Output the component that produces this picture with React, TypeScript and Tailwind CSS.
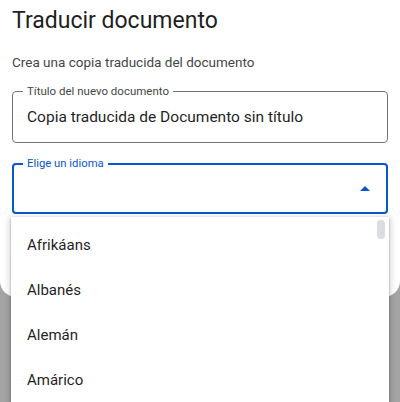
const languages = ["Afrikáans", "Albanés", "Alemán", "Amárico"];

export default function App() {
  return (
    <div
      className="relative h-[402px] w-[400px] overflow-hidden bg-[#a4a4a4]"
      style={{ fontFamily: "Roboto, 'Noto Sans', Arial, sans-serif" }}
    >
      {/* dialog */}
      <div className="h-[297px] rounded-b-[16px] bg-white px-3 pt-[7px]">
        <h1 className="text-[23px] leading-[28px] text-[#1f1f1f]">
          Traducir documento
        </h1>
        <p className="mt-[17px] text-[13.5px] leading-[20px] text-[#444746]">
          Crea una copia traducida del documento
        </p>

        <fieldset className="mt-[13px] rounded-[4px] border border-[#747775] px-[14px] pb-[13px] pt-[7px]">
          <legend className="-ml-[4px] px-[4px] text-[11.5px] leading-[13px] text-[#444746]">
            Título del nuevo documento
          </legend>
          <div className="text-[15.5px] leading-[24px] text-[#1f1f1f]">
            Copia traducida de Documento sin título
          </div>
        </fieldset>

        <fieldset className="mt-[14px] rounded-[4px] border-2 border-[#0b57d0] pl-[13px] pr-[15px] pb-[12px] pt-[6px]">
          <legend className="-ml-[4px] px-[4px] text-[11.3px] leading-[13px] text-[#0b57d0]">
            Elige un idioma
          </legend>
          <div className="flex h-[24px] items-center justify-end">
            <svg width="10" height="5" viewBox="0 0 10 5" className="mr-[1px]">
              <path d="M0 5 L5 0 L10 5 Z" fill="#0b57d0" />
            </svg>
          </div>
        </fieldset>
      </div>

      {/* dropdown menu */}
      <div className="absolute left-[11px] top-[217px] h-[200px] w-[378px] bg-white pt-[6px] shadow-[0_2px_6px_2px_rgba(0,0,0,0.15),0_1px_2px_rgba(0,0,0,0.3)]">
        <div className="absolute right-[4px] top-[3px] h-[19px] w-[8px] rounded-full bg-[#dadce0]" />
        {languages.map((lang) => (
          <div
            key={lang}
            className="flex h-[45px] items-center px-4 text-[15px] text-[#1f1f1f]"
          >
            {lang}
          </div>
        ))}
      </div>
    </div>
  );
}
